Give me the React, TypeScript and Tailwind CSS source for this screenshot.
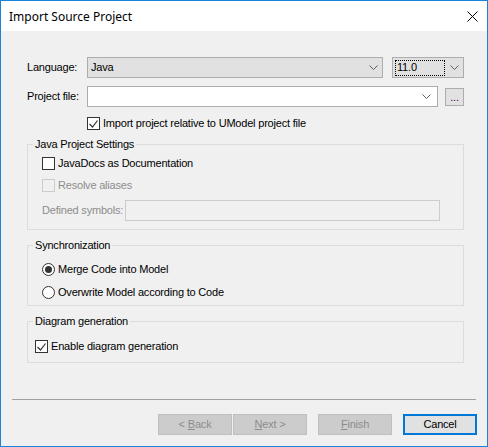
import React from "react";

const Chevron = () => (
  <svg width="9" height="5" viewBox="0 0 9 5" className="block">
    <path d="M0.5 0.5 L4.5 4.5 L8.5 0.5" fill="none" stroke="#606060" strokeWidth="1" />
  </svg>
);

const Check = ({ disabled }: { disabled?: boolean }) => (
  <svg width="9" height="8" viewBox="0 0 9 8" className="block">
    <path d="M0.5 4 L3.5 7 L8.5 0.5" fill="none" stroke={disabled ? "#bcbcbc" : "#333333"} strokeWidth="1.2" />
  </svg>
);

const CheckBox = ({ checked, disabled }: { checked?: boolean; disabled?: boolean }) => (
  <div
    className={
      "w-[13px] h-[13px] border flex items-center justify-center shrink-0 " +
      (disabled ? "border-[#cccccc] bg-[#f0f0f0]" : "border-[#333333] bg-white")
    }
  >
    {checked && <Check disabled={disabled} />}
  </div>
);

const Radio = ({ checked }: { checked?: boolean }) => (
  <div className="w-[13px] h-[13px] rounded-full border border-[#333333] bg-white flex items-center justify-center shrink-0">
    {checked && <div className="w-[7px] h-[7px] rounded-full bg-[#333333]" />}
  </div>
);

const Group = ({ title, h, children }: { title: string; h: string; children: React.ReactNode }) => (
  <div className={"relative ml-[26px] w-[437px] border border-[#dcdcdc] " + h}>
    <div className="absolute -top-[7px] left-[5px] px-[2px] bg-[#f0f0f0] leading-[13px]">{title}</div>
    {children}
  </div>
);

export default function App() {
  return (
    <div
      className="w-[488px] h-[447px] border border-[#1883d7] bg-[#f0f0f0] flex flex-col text-black text-[11px] tracking-[-0.2px] leading-[13px]"
      style={{ fontFamily: '"Liberation Sans", Arial, sans-serif' }}
    >
      {/* Title bar */}
      <div className="h-[30px] bg-white flex items-center justify-between shrink-0">
        <div
          className="pl-[8px] text-[12px] tracking-normal text-black"
          style={{ fontFamily: '"Segoe UI", "Noto Sans", sans-serif' }}
        >
          Import Source Project
        </div>
        <div className="pr-[9px]">
          <svg width="11" height="11" viewBox="0 0 11 11" className="block">
            <path d="M0.5 0.5 L10.5 10.5 M10.5 0.5 L0.5 10.5" stroke="#000" strokeWidth="1" />
          </svg>
        </div>
      </div>

      {/* Language row */}
      <div className="mt-[26px] flex items-center h-[21px] pl-[26px]">
        <div className="w-[60px]">Language:</div>
        <div className="w-[296px] h-[21px] bg-[#e1e1e1] border border-[#adadad] flex items-center justify-between pl-[3px] pr-[4px]">
          <span>Java</span>
          <Chevron />
        </div>
        <div className="ml-[9px] w-[72px] h-[21px] bg-[#e1e1e1] border border-[#adadad] flex items-center justify-between pl-[2px] pr-[4px]">
          <div className="w-[50px] h-[16px] border border-dotted border-black flex items-center pl-[1px]">11.0</div>
          <Chevron />
        </div>
      </div>

      {/* Project file row */}
      <div className="mt-[8px] flex items-center h-[21px] pl-[26px]">
        <div className="w-[60px]">Project file:</div>
        <div className="w-[351px] h-[21px] bg-white border border-[#adadad] flex items-center justify-end pr-[6px]">
          <Chevron />
        </div>
        <div className="ml-[7px] w-[19px] h-[18px] bg-[#e1e1e1] border border-[#adadad] flex items-center justify-center text-[#4b0050] leading-[10px]">
          ...
        </div>
      </div>

      {/* Import relative checkbox */}
      <div className="mt-[10px] flex items-center h-[13px] pl-[86px]">
        <CheckBox checked />
        <span className="ml-[3px]">Import project relative to UModel project file</span>
      </div>

      <div className="mt-[14px]">
        <Group title="Java Project Settings" h="h-[86px]">
          <div className="pl-[14px] pt-[12px] flex flex-col">
            <div className="flex items-center h-[13px]">
              <CheckBox />
              <span className="ml-[3px]">JavaDocs as Documentation</span>
            </div>
            <div className="mt-[9px] flex items-center h-[13px] text-[#8d8d8d]">
              <CheckBox disabled />
              <span className="ml-[3px]">Resolve aliases</span>
            </div>
            <div className="mt-[8px] flex items-center h-[21px] text-[#8d8d8d]">
              <div className="w-[83px]">Defined symbols:</div>
              <div className="w-[315px] h-[21px] border border-[#cccccc] bg-[#f0f0f0]" />
            </div>
          </div>
        </Group>
      </div>

      <div className="mt-[15px]">
        <Group title="Synchronization" h="h-[61px]">
          <div className="pl-[14px] pt-[17px] flex flex-col">
            <div className="flex items-center h-[13px]">
              <Radio checked />
              <span className="ml-[3px]">Merge Code into Model</span>
            </div>
            <div className="mt-[10px] flex items-center h-[13px]">
              <Radio />
              <span className="ml-[3px]">Overwrite Model according to Code</span>
            </div>
          </div>
        </Group>
      </div>

      <div className="mt-[15px]">
        <Group title="Diagram generation" h="h-[42px]">
          <div className="pl-[7px] pt-[18px] flex flex-col">
            <div className="flex items-center h-[13px]">
              <CheckBox checked />
              <span className="ml-[3px]">Enable diagram generation</span>
            </div>
          </div>
        </Group>
      </div>

      {/* Separator */}
      <div className="mt-[36px] mx-[11px] h-[1px] bg-[#a0a0a0]" />

      {/* Buttons */}
      <div className="mt-[14px] flex pl-[157px]">
        <div className="w-[74px] h-[21px] bg-[#cccccc] border border-[#bfbfbf] flex items-center justify-center text-[#8d8d8d]">
          &lt; <span className="underline ml-[3px]">B</span>ack
        </div>
        <div className="ml-[1px] w-[74px] h-[21px] bg-[#cccccc] border border-[#bfbfbf] flex items-center justify-center text-[#8d8d8d]">
          <span className="underline">N</span>ext &gt;
        </div>
        <div className="ml-[11px] w-[74px] h-[21px] bg-[#cccccc] border border-[#bfbfbf] flex items-center justify-center text-[#8d8d8d]">
          <span className="underline">F</span>inish
        </div>
        <div className="ml-[11px] w-[74px] h-[21px] bg-[#e1e1e1] border-2 border-[#0078d7] flex items-center justify-center">
          Cancel
        </div>
      </div>
    </div>
  );
}
